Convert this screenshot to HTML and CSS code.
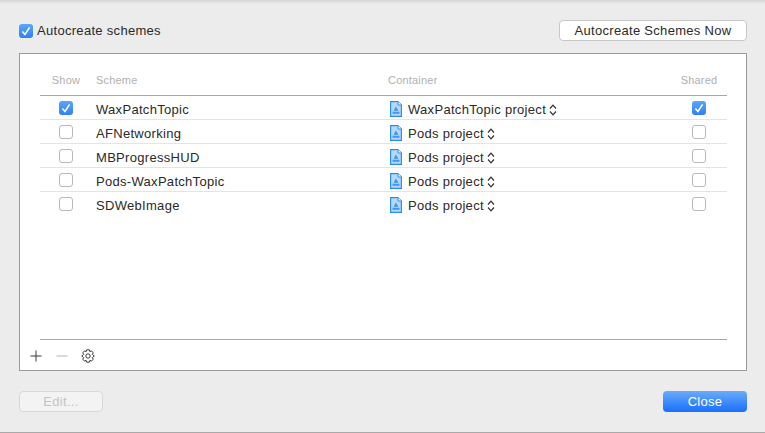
FILE: index.html
```html
<!DOCTYPE html>
<html lang="en">

<head>
    <meta charset="UTF-8">
    <title>Autocreate schemes</title>
    <link rel="stylesheet" href="styles.css">
</head>

<body>
    <svg class="defs" width="0" height="0">
        <symbol id="tick" viewBox="0 0 14 14">
            <path d="M3.4 7.4 L6 10.4 L10.6 3.4" fill="none" stroke="#fff" stroke-width="1.6" />
        </symbol>
        <symbol id="doc" viewBox="0 0 12 16">
            <path d="M.6 .6 H8 L11.4 4 V15.4 H.6 Z" fill="#b5d9fa" stroke="#2b8fec" stroke-width="1.2" />
            <path d="M8 .6 V4 H11.4" fill="#fff" stroke="#2b8fec" />
            <path d="M2.5 12.8 H9.5 V10.8 H2.5 Z M3.5 9.8 L6 5.5 L8.5 9.8 Z" fill="#3f97ee" />
        </symbol>
        <symbol id="updown" viewBox="0 0 8 12">
            <path d="M1 4.5 L4 1.2 L7 4.5 M1 7.5 L4 10.8 L7 7.5" fill="none" stroke="#333" stroke-width="1.2" />
        </symbol>
    </svg>

    <div class="top-bar">
        <label class="auto-check">
            <span class="check on"><svg><use href="#tick" /></svg></span>
            Autocreate schemes
        </label>
        <button class="btn now-btn">Autocreate Schemes Now</button>
    </div>

    <div class="panel">
        <div class="table">
            <div class="row head">
                <div class="col-show">Show</div>
                <div class="col-scheme">Scheme</div>
                <div class="col-container">Container</div>
                <div class="col-shared">Shared</div>
            </div>
            <div class="row">
                <div class="col-show"><span class="check on"><svg><use href="#tick" /></svg></span></div>
                <div class="col-scheme">WaxPatchTopic</div>
                <div class="col-container"><svg class="doc"><use href="#doc" /></svg>WaxPatchTopic project<svg class="updown"><use href="#updown" /></svg></div>
                <div class="col-shared"><span class="check on"><svg><use href="#tick" /></svg></span></div>
            </div>
            <div class="row">
                <div class="col-show"><span class="check"></span></div>
                <div class="col-scheme">AFNetworking</div>
                <div class="col-container"><svg class="doc"><use href="#doc" /></svg>Pods project<svg class="updown"><use href="#updown" /></svg></div>
                <div class="col-shared"><span class="check"></span></div>
            </div>
            <div class="row">
                <div class="col-show"><span class="check"></span></div>
                <div class="col-scheme">MBProgressHUD</div>
                <div class="col-container"><svg class="doc"><use href="#doc" /></svg>Pods project<svg class="updown"><use href="#updown" /></svg></div>
                <div class="col-shared"><span class="check"></span></div>
            </div>
            <div class="row">
                <div class="col-show"><span class="check"></span></div>
                <div class="col-scheme">Pods-WaxPatchTopic</div>
                <div class="col-container"><svg class="doc"><use href="#doc" /></svg>Pods project<svg class="updown"><use href="#updown" /></svg></div>
                <div class="col-shared"><span class="check"></span></div>
            </div>
            <div class="row last">
                <div class="col-show"><span class="check"></span></div>
                <div class="col-scheme">SDWebImage</div>
                <div class="col-container"><svg class="doc"><use href="#doc" /></svg>Pods project<svg class="updown"><use href="#updown" /></svg></div>
                <div class="col-shared"><span class="check"></span></div>
            </div>
        </div>
        <div class="tools">
            <svg class="tool" width="12" height="12" viewBox="0 0 12 12"><path d="M6 .5 V11.5 M.5 6 H11.5" stroke="#3a3a3a" fill="none" /></svg>
            <svg class="tool" width="12" height="12" viewBox="0 0 12 12"><path d="M.5 6 H11.5" stroke="#b5b5b5" fill="none" /></svg>
            <svg class="tool gear" width="14" height="14" viewBox="0 0 14 14">
                <path d="M5.7 .8 H8.3 L8.8 2.6 L10.5 1.9 L12.3 3.9 L11.3 5.4 L13.3 7 L11.3 8.6 L12.3 10.1 L10.5 12.1 L8.8 11.4 L8.3 13.2 H5.7 L5.2 11.4 L3.5 12.1 L1.7 10.1 L2.7 8.6 L.7 7 L2.7 5.4 L1.7 3.9 L3.5 1.9 L5.2 2.6 Z" fill="none" stroke="#3a3a3a" />
                <circle cx="7" cy="7" r="2.2" fill="none" stroke="#3a3a3a" />
            </svg>
        </div>
    </div>

    <div class="bottom-bar">
        <button class="btn edit-btn" disabled>Edit...</button>
        <button class="btn close-btn">Close</button>
    </div>
</body>

</html>
```

FILE: styles.css
```css
html,
body {
    height: 100%;
}

body {
    margin: 0;
    box-sizing: border-box;
    height: 433px;
    overflow: hidden;
    padding: 20px 18px 0 19px;
    font-family: 'Liberation Sans', sans-serif;
    font-size: 13px;
    letter-spacing: 0.3px;
    color: #2a2a2a;
    background: linear-gradient(to bottom, #d4d4d4, #ececec 4px);
    border-bottom: 1px solid #a9a9a9;
}

.defs {
    position: absolute;
}

.top-bar,
.bottom-bar {
    display: flex;
    justify-content: space-between;
    align-items: center;
}

.top-bar {
    height: 21px;
}

.auto-check {
    display: flex;
    align-items: center;
    gap: 4px;
}

.check {
    display: inline-block;
    box-sizing: border-box;
    width: 14px;
    height: 14px;
    border-radius: 3px;
    border: 1px solid #b9b9b9;
    background: #fff;
}

.check.on {
    border: none;
    background: linear-gradient(to bottom, #5ba6fb, #2f80f6);
}

.check svg {
    display: block;
    width: 14px;
    height: 14px;
}

.btn {
    box-sizing: border-box;
    height: 21px;
    padding: 0;
    font-family: inherit;
    font-size: 13px;
    letter-spacing: inherit;
    color: #2a2a2a;
    background: #fff;
    border: 1px solid #c8c8c8;
    border-radius: 4px;
}

.now-btn {
    width: 188px;
}

.panel {
    box-sizing: border-box;
    height: 318px;
    margin-top: 12px;
    padding: 17px 19px 0 20px;
    background: #fff;
    border: 1px solid #9b9b9b;
    display: flex;
    flex-direction: column;
}

.table {
    height: 270px;
    border-bottom: 1px solid #a8a8a8;
}

.row {
    display: grid;
    grid-template-columns: 56px 292px 277px 62px;
    align-items: center;
    height: 24px;
    border-bottom: 1px solid #e4e4e4;
    box-sizing: border-box;
}

.row.head {
    height: 25px;
    padding-bottom: 6px;
    border-bottom-color: #a8a8a8;
    font-size: 11px;
    letter-spacing: 0.2px;
    color: #b0b0b0;
}

.row.last {
    border-bottom-color: transparent;
}

.col-show,
.col-shared {
    display: flex;
    justify-content: center;
}

.col-show {
    padding-right: 4px;
}

.col-shared {
    padding-left: 6px;
}

.col-scheme,
.col-container {
    padding-top: 4px;
}

.head .col-scheme,
.head .col-container {
    padding-top: 0;
}

.col-container {
    display: flex;
    align-items: center;
}

.doc {
    width: 12px;
    height: 16px;
    margin: -2px 6px 0 2px;
}

.updown {
    width: 8px;
    height: 12px;
    margin-left: 3px;
}

.tools {
    display: flex;
    align-items: center;
    gap: 14px;
    height: 30px;
    padding-top: 2px;
    box-sizing: border-box;
    margin-left: -10px;
}

.gear {
    margin-left: -1px;
}

.bottom-bar {
    margin-top: 20px;
}

.edit-btn {
    width: 84px;
    color: #c4c4c4;
    background: #f3f3f3;
    border-color: #d8d8d8;
}

.close-btn {
    width: 84px;
    color: #fff;
    border: none;
    background: linear-gradient(to bottom, #69abfb, #1a6ffb);
}
```
